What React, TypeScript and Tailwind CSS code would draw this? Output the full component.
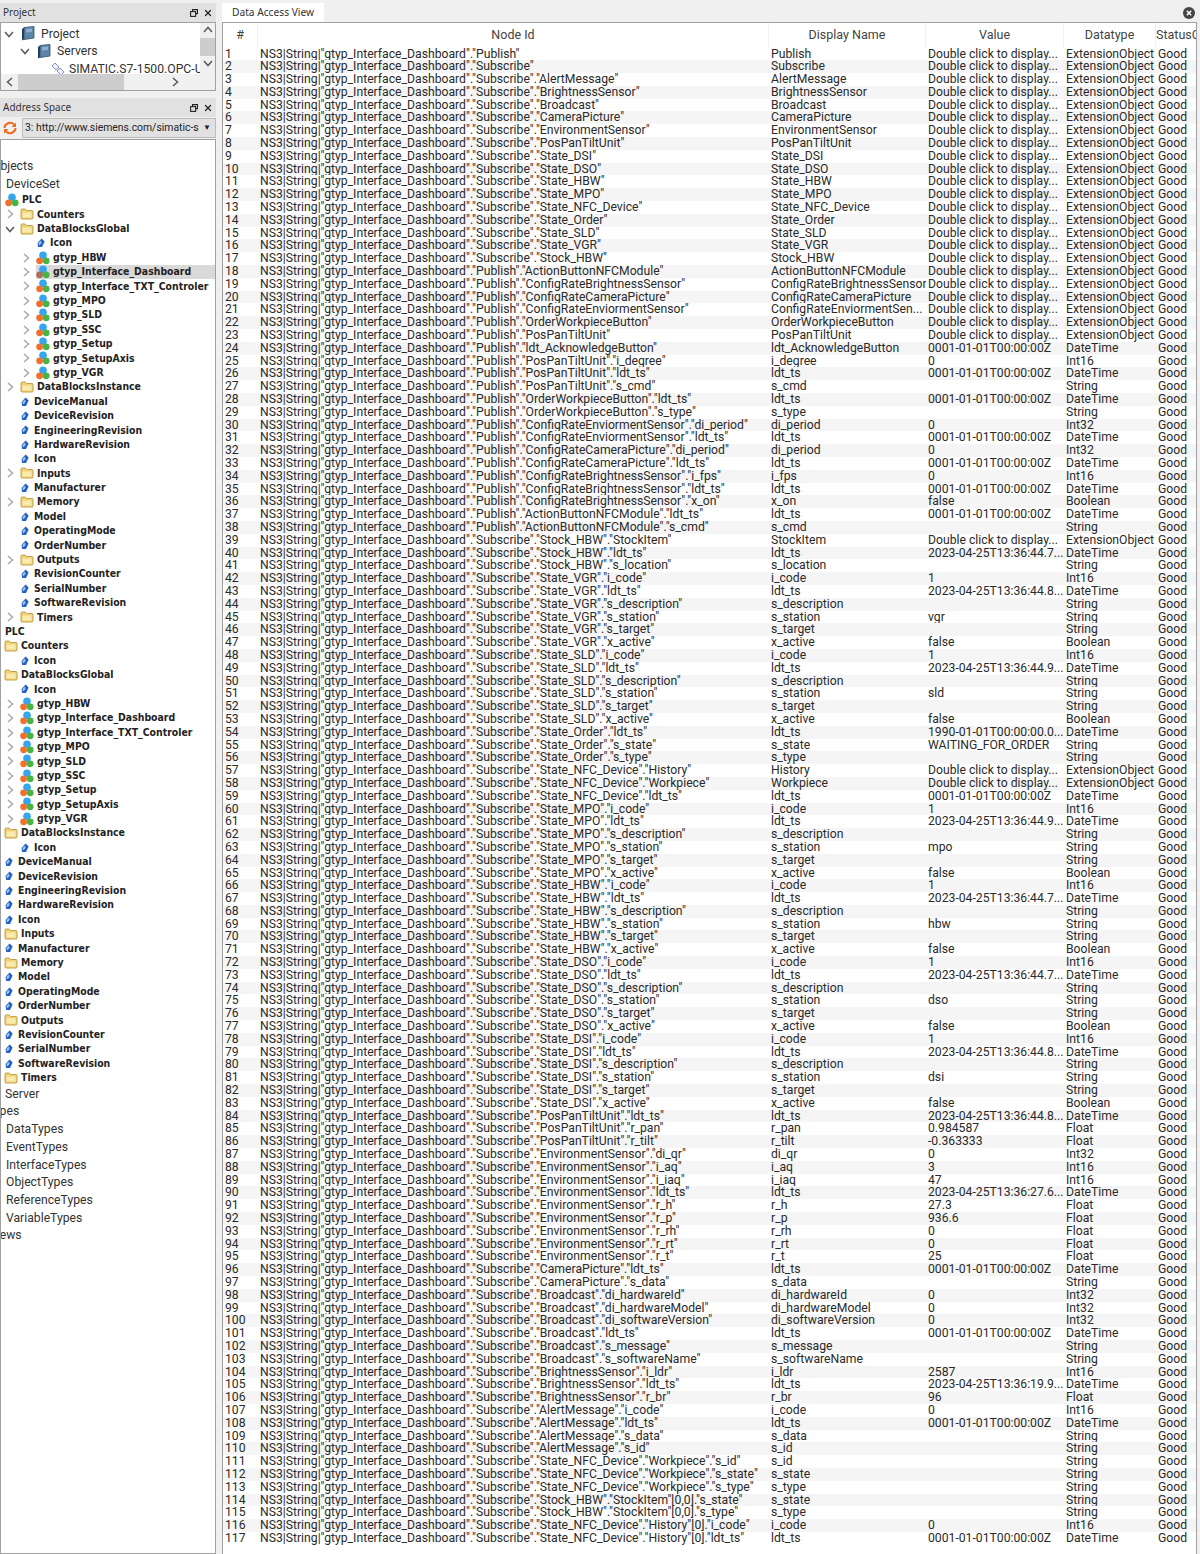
import { type FC } from 'react';
import { X } from 'lucide-react';

const ROWS = `Publish|Publish|D|E
Subscribe|Subscribe|D|E
Subscribe.AlertMessage|AlertMessage|D|E
Subscribe.BrightnessSensor|BrightnessSensor|D|E
Subscribe.Broadcast|Broadcast|D|E
Subscribe.CameraPicture|CameraPicture|D|E
Subscribe.EnvironmentSensor|EnvironmentSensor|D|E
Subscribe.PosPanTiltUnit|PosPanTiltUnit|D|E
Subscribe.State_DSI|State_DSI|D|E
Subscribe.State_DSO|State_DSO|D|E
Subscribe.State_HBW|State_HBW|D|E
Subscribe.State_MPO|State_MPO|D|E
Subscribe.State_NFC_Device|State_NFC_Device|D|E
Subscribe.State_Order|State_Order|D|E
Subscribe.State_SLD|State_SLD|D|E
Subscribe.State_VGR|State_VGR|D|E
Subscribe.Stock_HBW|Stock_HBW|D|E
Publish.ActionButtonNFCModule|ActionButtonNFCModule|D|E
Publish.ConfigRateBrightnessSensor|ConfigRateBrightnessSensor|D|E
Publish.ConfigRateCameraPicture|ConfigRateCameraPicture|D|E
Publish.ConfigRateEnviormentSensor|ConfigRateEnviormentSen...|D|E
Publish.OrderWorkpieceButton|OrderWorkpieceButton|D|E
Publish.PosPanTiltUnit|PosPanTiltUnit|D|E
Publish.ldt_AcknowledgeButton|ldt_AcknowledgeButton|Z|DateTime
Publish.PosPanTiltUnit.i_degree|i_degree|0|Int16
Publish.PosPanTiltUnit.ldt_ts|ldt_ts|Z|DateTime
Publish.PosPanTiltUnit.s_cmd|s_cmd||String
Publish.OrderWorkpieceButton.ldt_ts|ldt_ts|Z|DateTime
Publish.OrderWorkpieceButton.s_type|s_type||String
Publish.ConfigRateEnviormentSensor.di_period|di_period|0|Int32
Publish.ConfigRateEnviormentSensor.ldt_ts|ldt_ts|Z|DateTime
Publish.ConfigRateCameraPicture.di_period|di_period|0|Int32
Publish.ConfigRateCameraPicture.ldt_ts|ldt_ts|Z|DateTime
Publish.ConfigRateBrightnessSensor.i_fps|i_fps|0|Int16
Publish.ConfigRateBrightnessSensor.ldt_ts|ldt_ts|Z|DateTime
Publish.ConfigRateBrightnessSensor.x_on|x_on|false|Boolean
Publish.ActionButtonNFCModule.ldt_ts|ldt_ts|Z|DateTime
Publish.ActionButtonNFCModule.s_cmd|s_cmd||String
Subscribe.Stock_HBW.StockItem|StockItem|D|E
Subscribe.Stock_HBW.ldt_ts|ldt_ts|2023-04-25T13:36:44.7...|DateTime
Subscribe.Stock_HBW.s_location|s_location||String
Subscribe.State_VGR.i_code|i_code|1|Int16
Subscribe.State_VGR.ldt_ts|ldt_ts|2023-04-25T13:36:44.8...|DateTime
Subscribe.State_VGR.s_description|s_description||String
Subscribe.State_VGR.s_station|s_station|vgr|String
Subscribe.State_VGR.s_target|s_target||String
Subscribe.State_VGR.x_active|x_active|false|Boolean
Subscribe.State_SLD.i_code|i_code|1|Int16
Subscribe.State_SLD.ldt_ts|ldt_ts|2023-04-25T13:36:44.9...|DateTime
Subscribe.State_SLD.s_description|s_description||String
Subscribe.State_SLD.s_station|s_station|sld|String
Subscribe.State_SLD.s_target|s_target||String
Subscribe.State_SLD.x_active|x_active|false|Boolean
Subscribe.State_Order.ldt_ts|ldt_ts|1990-01-01T00:00:00.0...|DateTime
Subscribe.State_Order.s_state|s_state|WAITING_FOR_ORDER|String
Subscribe.State_Order.s_type|s_type||String
Subscribe.State_NFC_Device.History|History|D|E
Subscribe.State_NFC_Device.Workpiece|Workpiece|D|E
Subscribe.State_NFC_Device.ldt_ts|ldt_ts|Z|DateTime
Subscribe.State_MPO.i_code|i_code|1|Int16
Subscribe.State_MPO.ldt_ts|ldt_ts|2023-04-25T13:36:44.9...|DateTime
Subscribe.State_MPO.s_description|s_description||String
Subscribe.State_MPO.s_station|s_station|mpo|String
Subscribe.State_MPO.s_target|s_target||String
Subscribe.State_MPO.x_active|x_active|false|Boolean
Subscribe.State_HBW.i_code|i_code|1|Int16
Subscribe.State_HBW.ldt_ts|ldt_ts|2023-04-25T13:36:44.7...|DateTime
Subscribe.State_HBW.s_description|s_description||String
Subscribe.State_HBW.s_station|s_station|hbw|String
Subscribe.State_HBW.s_target|s_target||String
Subscribe.State_HBW.x_active|x_active|false|Boolean
Subscribe.State_DSO.i_code|i_code|1|Int16
Subscribe.State_DSO.ldt_ts|ldt_ts|2023-04-25T13:36:44.7...|DateTime
Subscribe.State_DSO.s_description|s_description||String
Subscribe.State_DSO.s_station|s_station|dso|String
Subscribe.State_DSO.s_target|s_target||String
Subscribe.State_DSO.x_active|x_active|false|Boolean
Subscribe.State_DSI.i_code|i_code|1|Int16
Subscribe.State_DSI.ldt_ts|ldt_ts|2023-04-25T13:36:44.8...|DateTime
Subscribe.State_DSI.s_description|s_description||String
Subscribe.State_DSI.s_station|s_station|dsi|String
Subscribe.State_DSI.s_target|s_target||String
Subscribe.State_DSI.x_active|x_active|false|Boolean
Subscribe.PosPanTiltUnit.ldt_ts|ldt_ts|2023-04-25T13:36:44.8...|DateTime
Subscribe.PosPanTiltUnit.r_pan|r_pan|0.984587|Float
Subscribe.PosPanTiltUnit.r_tilt|r_tilt|-0.363333|Float
Subscribe.EnvironmentSensor.di_qr|di_qr|0|Int32
Subscribe.EnvironmentSensor.i_aq|i_aq|3|Int16
Subscribe.EnvironmentSensor.i_iaq|i_iaq|47|Int16
Subscribe.EnvironmentSensor.ldt_ts|ldt_ts|2023-04-25T13:36:27.6...|DateTime
Subscribe.EnvironmentSensor.r_h|r_h|27.3|Float
Subscribe.EnvironmentSensor.r_p|r_p|936.6|Float
Subscribe.EnvironmentSensor.r_rh|r_rh|0|Float
Subscribe.EnvironmentSensor.r_rt|r_rt|0|Float
Subscribe.EnvironmentSensor.r_t|r_t|25|Float
Subscribe.CameraPicture.ldt_ts|ldt_ts|Z|DateTime
Subscribe.CameraPicture.s_data|s_data||String
Subscribe.Broadcast.di_hardwareId|di_hardwareId|0|Int32
Subscribe.Broadcast.di_hardwareModel|di_hardwareModel|0|Int32
Subscribe.Broadcast.di_softwareVersion|di_softwareVersion|0|Int32
Subscribe.Broadcast.ldt_ts|ldt_ts|Z|DateTime
Subscribe.Broadcast.s_message|s_message||String
Subscribe.Broadcast.s_softwareName|s_softwareName||String
Subscribe.BrightnessSensor.i_ldr|i_ldr|2587|Int16
Subscribe.BrightnessSensor.ldt_ts|ldt_ts|2023-04-25T13:36:19.9...|DateTime
Subscribe.BrightnessSensor.r_br|r_br|96|Float
Subscribe.AlertMessage.i_code|i_code|0|Int16
Subscribe.AlertMessage.ldt_ts|ldt_ts|Z|DateTime
Subscribe.AlertMessage.s_data|s_data||String
Subscribe.AlertMessage.s_id|s_id||String
Subscribe.State_NFC_Device.Workpiece.s_id|s_id||String
Subscribe.State_NFC_Device.Workpiece.s_state|s_state||String
Subscribe.State_NFC_Device.Workpiece.s_type|s_type||String
Subscribe.Stock_HBW.StockItem[0,0].s_state|s_state||String
Subscribe.Stock_HBW.StockItem[0,0].s_type|s_type||String
Subscribe.State_NFC_Device.History[0].i_code|i_code|0|Int16
Subscribe.State_NFC_Device.History[0].ldt_ts|ldt_ts|Z|DateTime`
  .split('\n')
  .map((line) => {
    const [path, display, value, type] = line.split('|');
    const quoted = path.split('.').map((seg) => seg.replace(/^([^[]+)(.*)$/, '"$1"$2'));
    return {
      node: `NS3|String|"gtyp_Interface_Dashboard".${quoted.join('.')}`,
      display,
      value: value === 'D' ? 'Double click to display...' : value === 'Z' ? '0001-01-01T00:00:00Z' : value,
      type: type === 'E' ? 'ExtensionObject' : type
    };
  });

type TreeRow = {
  x: number;
  label: string;
  arrow?: 'r' | 'd';
  icon?: 'folder' | 'cube' | 'tag';
  bold?: boolean;
  selected?: boolean;
};

const GTYPES = ['gtyp_HBW', 'gtyp_Interface_Dashboard', 'gtyp_Interface_TXT_Controler', 'gtyp_MPO', 'gtyp_SLD', 'gtyp_SSC', 'gtyp_Setup', 'gtyp_SetupAxis', 'gtyp_VGR'];

const plcMembers = (shift: number): TreeRow[] => {
  const tag = (label: string): TreeRow => ({ x: 34 - shift, label, icon: 'tag', bold: true });
  const folder = (label: string): TreeRow => ({ x: 37 - shift, label, icon: 'folder', arrow: 'r', bold: true });
  return [
    tag('DeviceManual'),
    tag('DeviceRevision'),
    tag('EngineeringRevision'),
    tag('HardwareRevision'),
    tag('Icon'),
    folder('Inputs'),
    tag('Manufacturer'),
    folder('Memory'),
    tag('Model'),
    tag('OperatingMode'),
    tag('OrderNumber'),
    folder('Outputs'),
    tag('RevisionCounter'),
    tag('SerialNumber'),
    tag('SoftwareRevision'),
    folder('Timers')
  ];
};

const TREE: TreeRow[] = [
  { x: -8, label: 'Objects' },
  { x: 6, label: 'DeviceSet' },
  { x: 22, label: 'PLC', icon: 'cube', bold: true },
  { x: 37, label: 'Counters', icon: 'folder', arrow: 'r', bold: true },
  { x: 37, label: 'DataBlocksGlobal', icon: 'folder', arrow: 'd', bold: true },
  { x: 50, label: 'Icon', icon: 'tag', bold: true },
  ...GTYPES.map((label): TreeRow => ({ x: 53, label, icon: 'cube', arrow: 'r', bold: true, selected: label === 'gtyp_Interface_Dashboard' })),
  { x: 37, label: 'DataBlocksInstance', icon: 'folder', arrow: 'r', bold: true },
  ...plcMembers(0),
  { x: 5, label: 'PLC', bold: true },
  { x: 21, label: 'Counters', icon: 'folder', bold: true },
  { x: 34, label: 'Icon', icon: 'tag', bold: true },
  { x: 21, label: 'DataBlocksGlobal', icon: 'folder', bold: true },
  { x: 34, label: 'Icon', icon: 'tag', bold: true },
  ...GTYPES.map((label): TreeRow => ({ x: 37, label, icon: 'cube', arrow: 'r', bold: true })),
  { x: 21, label: 'DataBlocksInstance', icon: 'folder', bold: true },
  { x: 34, label: 'Icon', icon: 'tag', bold: true },
  ...plcMembers(16),
  { x: 5, label: 'Server' },
  { x: -13, label: 'Types' },
  { x: 6, label: 'DataTypes' },
  { x: 6, label: 'EventTypes' },
  { x: 6, label: 'InterfaceTypes' },
  { x: 6, label: 'ObjectTypes' },
  { x: 6, label: 'ReferenceTypes' },
  { x: 6, label: 'VariableTypes' },
  { x: -11, label: 'Views' }
];

const CHEVRONS = {
  r: 'M3 1 7.5 5 3 9',
  l: 'M7 1 2.5 5 7 9',
  d: 'M1 3 5 7.5 9 3',
  u: 'M1 7 5 2.5 9 7'
};

const Chev: FC<{ dir: 'r' | 'l' | 'd' | 'u'; light?: boolean }> = ({ dir, light }) => (
  <svg width="10" height="10" viewBox="0 0 10 10" fill="none" stroke={light ? '#a8a8a8' : '#5a5a5a'} strokeWidth="1.5" className="shrink-0">
    <path d={CHEVRONS[dir]} />
  </svg>
);

const CubeIcon: FC<{ dim?: boolean }> = ({ dim }) => (
  <svg width="14" height="14" viewBox="0 0 14 14" className="shrink-0">
    <circle cx="7" cy="4.2" r="3.8" fill="#35a5ee" />
    <circle cx="3.6" cy="9.8" r="3.4" fill={dim ? '#a8705a' : '#f2702e'} />
    <circle cx="10.2" cy="9.8" r="3.4" fill="#45b545" />
  </svg>
);

const FolderIcon: FC = () => (
  <svg width="14" height="12" viewBox="0 0 14 12" className="shrink-0">
    <path d="M1 3V2q0-1 1-1h3l1.5 1.5H12q1 0 1 1V10q0 1-1 1H2q-1 0-1-1Z" fill="#f0d278" stroke="#c4a24a" strokeWidth="1" />
    <rect x="2.5" y="4.5" width="9" height="5" fill="#f9eab0" />
  </svg>
);

const TagIcon: FC = () => (
  <svg width="8" height="10" viewBox="0 0 8 10" className="shrink-0">
    <path d="M4.6 0.5 7.6 3.5 5 9 1.2 9 0.5 5Z" fill="#1f5fc4" />
    <path d="M1.2 5 4 2.4 4.6 5 2.4 7.4Z" fill="#9cc4ee" />
  </svg>
);

const ServerIcon: FC = () => (
  <svg width="14" height="15" viewBox="0 0 14 15" className="shrink-0">
    <path d="M3 1.5 13 0.5V12L3 13.5Z" fill="#5e85a8" stroke="#2f4f70" strokeWidth="0.8" />
    <path d="M1 3 3 1.5V13.5L1 14.5Z" fill="#27405c" />
    <path d="M5 3 11 2.4V6L5 6.6Z" fill="#8fb0cc" />
  </svg>
);

const LinkIcon: FC = () => (
  <svg width="14" height="14" viewBox="0 0 14 14" className="shrink-0">
    <path d="M1 4 4 1 8 5 5 8Z" fill="#eef1fb" stroke="#7d8fd0" strokeWidth="1" />
    <path d="M6 9 9 6 13 10 10 13Z" fill="#eef1fb" stroke="#7d8fd0" strokeWidth="1" />
  </svg>
);

const RefreshIcon: FC = () => (
  <svg width="14" height="14" viewBox="0 0 14 14" fill="none">
    <path d="M1.5 7A5.5 5 0 0 1 11 3.5" stroke="#f06a1a" strokeWidth="2" />
    <path d="M12.5 7A5.5 5 0 0 1 3 10.5" stroke="#f06a1a" strokeWidth="2" />
    <path d="M13 1.5V6H8.5Z" fill="#f06a1a" />
    <path d="M1 12.5V8H5.5Z" fill="#f06a1a" />
  </svg>
);

const FloatIcon: FC = () => (
  <svg width="8" height="8" viewBox="0 0 8 8" fill="none" stroke="#222" strokeWidth="1.1" className="shrink-0">
    <path d="M2.5 2.5V0.6H7.5V4.6H5.6" />
    <rect x="0.6" y="2.6" width="5" height="4.8" />
  </svg>
);

const PanelHeader: FC<{ title: string }> = ({ title }) => (
  <div className="flex h-[19px] shrink-0 items-center bg-[#e1e1e1] pl-[3px] pr-[3px] font-['Noto_Sans',sans-serif] text-[10px] text-[#333]">
    <span className="flex-1">{title}</span>
    <FloatIcon />
    <X size={10} strokeWidth={3} className="ml-[5px] shrink-0 text-[#222]" />
  </div>
);

const ProjectRow: FC<{ x: number; label: string; icon: 'server' | 'link'; open?: boolean }> = ({ x, label, icon, open }) => (
  <div className="flex h-[17.6px] items-center whitespace-nowrap" style={{ marginLeft: x }}>
    {open && (
      <span className="mr-[7px]">
        <Chev dir="d" />
      </span>
    )}
    {icon === 'server' ? <ServerIcon /> : <LinkIcon />}
    <span className={icon === 'link' ? 'ml-[4px]' : 'ml-[6px]'}>{label}</span>
  </div>
);

const ProjectPanel: FC = () => (
  <div className="flex h-[69px] shrink-0 border border-[#a0a0a0] bg-white text-[12.2px] text-[#333]">
    <div className="flex min-w-0 flex-1 flex-col">
      <div className="h-[51px] overflow-hidden pt-[2px]">
        <ProjectRow x={3} label="Project" icon="server" open />
        <ProjectRow x={19} label="Servers" icon="server" open />
        <ProjectRow x={50} label="SIMATIC.S7-1500.OPC-UA" icon="link" />
      </div>
      <div className="flex h-[16px] items-center bg-[#f0f0f0]">
        <span className="flex w-[17px] shrink-0 justify-center">
          <Chev dir="l" />
        </span>
        <div className="h-full w-[106px] bg-[#cdcdcd]" />
        <div className="flex-1" />
        <span className="mr-[20px] shrink-0">
          <Chev dir="r" />
        </span>
      </div>
    </div>
    <div className="flex w-[15px] shrink-0 flex-col items-center bg-[#f0f0f0]">
      <span className="mt-[2px] mb-[3px]">
        <Chev dir="u" />
      </span>
      <div className="h-[18px] w-full bg-[#cdcdcd]" />
      <span className="mt-[2px]">
        <Chev dir="d" />
      </span>
    </div>
  </div>
);

const AddressTree: FC = () => (
  <div className="min-h-0 flex-1 overflow-hidden border border-[#a0a0a0] bg-white pt-[17.5px]">
    {TREE.map((row, i) => {
      const arrowSlot = row.arrow ? 16 : 0;
      const iconSlot = row.icon === 'tag' ? 13 : row.icon ? 17 : 0;
      return (
        <div
          key={i}
          className={`flex items-center whitespace-nowrap ${row.bold ? "h-[14.4px] font-['DejaVu_Sans_Condensed','DejaVu_Sans',sans-serif] text-[10.4px] font-bold text-[#222]" : 'h-[17.7px] text-[12.2px] text-[#333]'}`}
          style={{ marginLeft: row.x - arrowSlot - iconSlot - 1 }}
        >
          {row.arrow && (
            <span className="flex w-[16px] shrink-0 pl-px">
              <Chev dir={row.arrow} light={row.arrow === 'r'} />
            </span>
          )}
          <span className={`flex h-full flex-1 items-center ${row.selected ? 'bg-[#d9d9d9]' : ''}`}>
            {row.icon && (
              <span className={`flex shrink-0 ${row.icon === 'tag' ? 'w-[13px]' : 'w-[17px]'}`}>
                {row.icon === 'cube' && <CubeIcon dim={row.selected} />}
                {row.icon === 'folder' && <FolderIcon />}
                {row.icon === 'tag' && <TagIcon />}
              </span>
            )}
            {row.label}
          </span>
        </div>
      );
    })}
  </div>
);

const COLS = [
  { label: '#', w: 'w-[35px]' },
  { label: 'Node Id', w: 'w-[511px]' },
  { label: 'Display Name', w: 'w-[157px]' },
  { label: 'Value', w: 'w-[138px]' },
  { label: 'Datatype', w: 'w-[92px]' },
  { label: 'StatusCode', w: 'w-[41px]' }
];

const Cell: FC<{ w: string; children: string | number }> = ({ w, children }) => (
  <div className={`${w} shrink-0 overflow-hidden whitespace-nowrap pl-[2px]`}>{children}</div>
);

const App: FC = () => {
  return (
    <div className="flex h-[1554px] w-[1200px] overflow-hidden bg-[#f0f0f0] font-['Roboto',sans-serif]">
      <div className="flex w-[216px] shrink-0 flex-col pt-[3px]">
        <PanelHeader title="Project" />
        <ProjectPanel />
        <div className="h-[7px] shrink-0" />
        <PanelHeader title="Address Space" />
        <div className="flex h-[22px] shrink-0 items-center gap-[2px] pb-px">
          <span className="flex w-[20px] justify-center">
            <RefreshIcon />
          </span>
          <div className="flex h-[20px] min-w-0 flex-1 items-center border border-[#bdbdbd] bg-[#e1e1e1] pl-[2px] text-[10.4px] text-[#222]">
            <span className="flex-1 overflow-hidden whitespace-nowrap">3: http://www.siemens.com/simatic-s7-opcua</span>
            <span className="w-[16px] shrink-0 text-center text-[8px]">▼</span>
          </div>
        </div>
        <AddressTree />
      </div>

      <div className="flex min-w-0 flex-1 flex-col pl-[6px] pr-[3px] pt-[3px]">
        <div className="flex h-[19px] shrink-0 items-center">
          <div className="flex h-full w-[102px] items-center justify-center bg-white font-['Noto_Sans',sans-serif] text-[10.2px] text-[#333]">Data Access View</div>
          <div className="flex-1" />
          <svg width="12" height="12" viewBox="0 0 12 12" className="mr-[2px]">
            <circle cx="6" cy="6" r="6" fill="#444" />
            <path d="M3.8 3.8 8.2 8.2M8.2 3.8 3.8 8.2" stroke="#fff" strokeWidth="1.5" />
          </svg>
        </div>
        <div className="min-h-0 flex-1 overflow-hidden border-l border-t border-r border-[#a0a0a0] bg-white text-[12.2px] text-[#2a2a2a]">
          <div className="flex h-[24.5px] items-center bg-white text-[12.5px] text-[#444]">
            {COLS.map((col) => (
              <div key={col.label} className={`${col.w} h-full shrink-0 overflow-hidden whitespace-nowrap border-r border-[#f0f0f0] pt-[3px] text-center`}>
                {col.label}
              </div>
            ))}
          </div>
          {ROWS.map((row, i) => (
            <div key={i} className={`flex h-[12.8px] leading-[12.8px] ${i % 2 === 1 ? 'bg-[#f5f5f5]' : 'bg-white'}`}>
              <Cell w="w-[35px]">{i + 1}</Cell>
              <Cell w="w-[511px]">{row.node}</Cell>
              <Cell w="w-[157px]">{row.display}</Cell>
              <Cell w="w-[138px]">{row.value}</Cell>
              <Cell w="w-[92px]">{row.type}</Cell>
              <Cell w="w-[40px]">Good</Cell>
            </div>
          ))}
        </div>
      </div>
    </div>
  );
};

export default App;
